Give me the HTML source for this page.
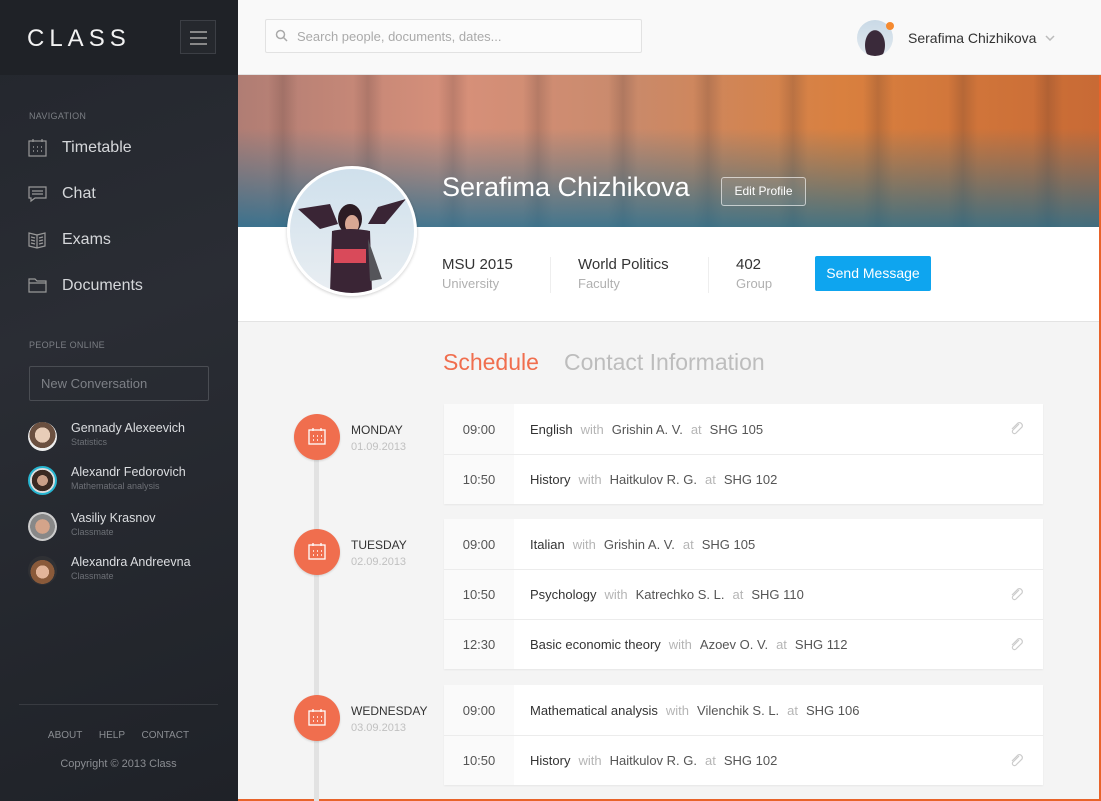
<!DOCTYPE html>
<html><head><meta charset="utf-8"><style>
*{box-sizing:border-box;margin:0;padding:0}
body{width:1101px;height:801px;overflow:hidden;font-family:"Liberation Sans",sans-serif;background:#f4f4f4;position:relative}
.sb{position:absolute;left:0;top:0;width:238px;height:801px;background:linear-gradient(160deg,#23262d 0%,#2a2d34 40%,#1f2228 100%)}
.sb .top{height:75px;background:#1f2227}
.logo{position:absolute;left:27px;top:25px;color:#f2f2f2;font-size:24px;letter-spacing:5px}
.burger{position:absolute;left:180px;top:20px;width:36px;height:34px;border:1px solid #3c3f45;background:#25282d}
.burger i{position:absolute;left:9px;width:17px;height:2px;background:#888}
.sec{position:absolute;left:29px;font-size:9px;color:#7b7e84;letter-spacing:.3px}
.nav{position:absolute;left:28px;color:#d5d7da;font-size:16px;display:flex;align-items:center}
.nav svg{margin-right:15px}
.nc{position:absolute;left:29px;top:366px;width:180px;height:35px;border:1px solid #4a4d53;border-radius:2px;color:#7d8086;font-size:13px;padding:9px 11px}
.p{position:absolute;left:28px;display:flex}
.p .av{width:29px;height:29px;border-radius:50%;margin-right:14px;margin-top:1px}
.p b{display:block;font-weight:normal;color:#dcdee1;font-size:12.5px}
.p s{text-decoration:none;display:block;color:#6d7076;font-size:9px;margin-top:2px}
.foot{position:absolute;left:19px;top:704px;width:199px;border-top:1px solid #383b41;color:#8a8d92;font-size:10px;text-align:center}
.hd{position:absolute;left:238px;top:0;width:863px;height:75px;background:#f9f9f9;border-bottom:1px solid #e4e4e4}
.search{position:absolute;left:27px;top:19px;width:377px;height:34px;border:1px solid #e2e2e2;background:#fbfbfb;border-radius:2px;color:#aaa;font-size:13px;padding:9px 0 0 31px}
.banner{position:absolute;left:238px;top:75px;width:861px;height:152px;background:linear-gradient(180deg,rgba(0,0,0,0) 35%,rgba(20,110,150,.75) 100%),repeating-linear-gradient(90deg,rgba(60,40,40,0) 0 30px,rgba(60,40,40,.18) 45px,rgba(60,40,40,0) 60px,rgba(0,0,0,0) 85px),linear-gradient(90deg,#b07d74 0%,#d7907a 25%,#c98a6c 45%,#d9803f 70%,#c86a35 100%)}
.prof{position:absolute;left:238px;top:227px;width:861px;height:95px;background:#fff;border-bottom:1px solid #e3e3e3}
.avatar{position:absolute;left:287px;top:166px;width:130px;height:130px;border-radius:50%;border:3px solid #fff;overflow:hidden;background:linear-gradient(180deg,#cfe0ec,#e9eef2);box-shadow:0 1px 3px rgba(0,0,0,.2)}
.name{position:absolute;left:442px;top:172px;color:#fff;font-size:27px}
.edit{position:absolute;left:721px;top:177px;width:85px;height:29px;border:1px solid rgba(255,255,255,.6);border-radius:3px;color:#fff;font-size:12px;text-align:center;line-height:27px;background:rgba(255,255,255,.08)}
.st{position:absolute;top:256px;font-size:15px;color:#333}
.st span{display:block;font-size:13px;color:#b0b0b0;margin-top:3px}
.div{position:absolute;top:257px;width:1px;height:36px;background:#eee}
.send{position:absolute;left:815px;top:256px;width:116px;height:35px;background:#0ea5ef;border-radius:2px;color:#fff;font-size:14px;text-align:center;line-height:35px}
.tab{position:absolute;top:349px;font-size:23px}
.line{position:absolute;left:314px;top:437px;width:5px;height:364px;background:#e2e2e2}
.dot{position:absolute;left:294px;width:46px;height:46px;border-radius:50%;background:#f06e4e;box-shadow:0 1px 2px rgba(0,0,0,.15)}
.dot svg{position:absolute;left:14px;top:13px}
.day{position:absolute;left:351px;font-size:12px;color:#333}
.day span{display:block;color:#c0c0c0;font-size:11px;margin-top:4px}
.card{position:absolute;left:444px;width:599px;background:#fff;box-shadow:0 1px 2px rgba(0,0,0,.06)}
.row{height:50px;border-top:1px solid #ececec;display:flex;align-items:center;font-size:13px;color:#333;position:relative}
.row:first-child{border-top:none}
.row .t{width:70px;height:100%;background:#fafafa;display:flex;align-items:center;justify-content:center;color:#555}
.row .c{padding-left:16px}
.row i{font-style:normal;color:#b5b5b5;margin:0 8px}
.row .n{color:#555}
.clip{position:absolute;right:18px;top:17px}
</style></head><body>
<div class="sb"><div class="top"></div>
<div class="logo">CLASS</div>
<div class="burger"><i style="top:10px"></i><i style="top:16px"></i><i style="top:22px"></i></div>
<div class="sec" style="top:111px">NAVIGATION</div>
<div class="nav" style="top:138px"><svg width="19" height="19" viewBox="0 0 19 19" fill="none" stroke="#999" stroke-width="1.2"><rect x="1" y="3" width="17" height="15"/><path d="M5 1v3M14 1v3"/><path d="M5 9h1M9 9h1M13 9h1M5 13h1M9 13h1M13 13h1" stroke-width="1.6"/></svg>Timetable</div>
<div class="nav" style="top:184px"><svg width="19" height="19" viewBox="0 0 19 19" fill="none" stroke="#999" stroke-width="1.2"><path d="M1 3h17v11H7l-4 3v-3H1z"/><path d="M4 7h11M4 10h11"/></svg>Chat</div>
<div class="nav" style="top:230px"><svg width="19" height="19" viewBox="0 0 19 19" fill="none" stroke="#999" stroke-width="1.2"><path d="M1 3l8 2 8-2v13l-8 2-8-2z M9 5v13M3 7l4 1M3 10l4 1M3 13l4 1M11 8l4-1M11 11l4-1M11 14l4-1"/></svg>Exams</div>
<div class="nav" style="top:276px"><svg width="19" height="19" viewBox="0 0 19 19" fill="none" stroke="#999" stroke-width="1.2"><path d="M1 3h6l2 2h9v11H1zM1 7h17"/></svg>Documents</div>
<div class="sec" style="top:340px">PEOPLE ONLINE</div>
<div class="nc">New Conversation</div>
<div class="p" style="top:421px"><div class="av" style="background:radial-gradient(circle at 50% 45%,#e8cdb8 0 35%,#6b5040 36% 60%,#eee 61%)"></div><div><b>Gennady Alexeevich</b><s>Statistics</s></div></div>
<div class="p" style="top:465px"><div class="av" style="border:2px solid #26b5d0;background:radial-gradient(circle at 50% 50%,#c9a088 0 30%,#3a2a22 31% 60%,#ddd 61%)"></div><div><b>Alexandr Fedorovich</b><s>Mathematical analysis</s></div></div>
<div class="p" style="top:511px"><div class="av" style="background:radial-gradient(circle at 50% 50%,#d4a48a 0 35%,#888 36% 60%,#ccc 61%)"></div><div><b>Vasiliy Krasnov</b><s>Classmate</s></div></div>
<div class="p" style="top:555px"><div class="av" style="background:radial-gradient(circle at 50% 55%,#e3b59a 0 30%,#8a5a3a 31% 55%,#2f3034 56%)"></div><div><b>Alexandra Andreevna</b><s>Classmate</s></div></div>
<div class="foot"><div style="margin-top:25px">ABOUT &nbsp;&nbsp;&nbsp;&nbsp;&nbsp;HELP &nbsp;&nbsp;&nbsp;&nbsp;&nbsp;CONTACT</div><div style="margin-top:17px;font-size:11px">Copyright © 2013 Class</div></div>
</div>
<div class="hd"><div class="search">Search people, documents, dates...</div>
<svg style="position:absolute;left:37px;top:29px" width="13" height="13" viewBox="0 0 13 13" fill="none" stroke="#aaa" stroke-width="1.5"><circle cx="5.5" cy="5.5" r="4"/><path d="M8.5 8.5l3.5 3.5"/></svg>
<div style="position:absolute;left:619px;top:20px;width:36px;height:36px;border-radius:50%;background:radial-gradient(ellipse 30% 45% at 50% 70%,#3a2a3a 0 90%,transparent 95%),linear-gradient(#c9d9e6,#e2eaf0)"></div>
<div style="position:absolute;left:648px;top:22px;width:8px;height:8px;border-radius:50%;background:#f58a30"></div>
<div style="position:absolute;left:670px;top:30px;font-size:14px;color:#333">Serafima Chizhikova</div>
<svg style="position:absolute;left:807px;top:35px" width="10" height="6" viewBox="0 0 10 6" fill="none" stroke="#bbb" stroke-width="1.5"><path d="M1 1l4 4 4-4"/></svg>
</div>
<div class="banner"></div>
<div class="prof"></div>
<div style="position:absolute;left:1099px;top:75px;width:2px;height:726px;background:#e8632a"></div>
<div style="position:absolute;left:238px;top:799px;width:863px;height:2px;background:#e8632a"></div>
<div class="avatar"><svg width="124" height="124" viewBox="0 0 124 124"><path d="M8 40 L30 60 L48 55 L40 35 Z" fill="#3a2535"/><path d="M116 30 L95 55 L78 55 L88 38Z" fill="#3a2535"/><ellipse cx="60" cy="50" rx="12" ry="15" fill="#2c1c24"/><ellipse cx="62" cy="55" rx="7" ry="9" fill="#d9a894"/><path d="M42 62 Q60 58 80 62 L82 124 L40 124Z" fill="#3a2535"/><rect x="44" y="80" width="32" height="14" fill="#d94a5a"/><path d="M78 70 L92 110 L80 112Z" fill="#55555a"/></svg></div>
<div class="name">Serafima Chizhikova</div>
<div class="edit">Edit Profile</div>
<div class="st" style="left:442px">MSU 2015<span>University</span></div>
<div class="div" style="left:550px"></div>
<div class="st" style="left:578px">World Politics<span>Faculty</span></div>
<div class="div" style="left:708px"></div>
<div class="st" style="left:736px">402<span>Group</span></div>
<div class="send">Send Message</div>
<div class="tab" style="left:443px;color:#f06e4e">Schedule</div>
<div class="tab" style="left:564px;color:#bdbdbd">Contact Information</div>
<div class="line"></div>
<div class="dot" style="top:414px"><svg width="18" height="18" viewBox="0 0 18 18" fill="none" stroke="#fff" stroke-width="1.3"><rect x="1" y="3" width="16" height="14"/><path d="M5 1v3M13 1v3"/><path d="M5 9h1M9 9h1M13 9h1M5 13h1M9 13h1M13 13h1" stroke-width="1.6"/></svg></div>
<div class="dot" style="top:529px"><svg width="18" height="18" viewBox="0 0 18 18" fill="none" stroke="#fff" stroke-width="1.3"><rect x="1" y="3" width="16" height="14"/><path d="M5 1v3M13 1v3"/><path d="M5 9h1M9 9h1M13 9h1M5 13h1M9 13h1M13 13h1" stroke-width="1.6"/></svg></div>
<div class="dot" style="top:695px"><svg width="18" height="18" viewBox="0 0 18 18" fill="none" stroke="#fff" stroke-width="1.3"><rect x="1" y="3" width="16" height="14"/><path d="M5 1v3M13 1v3"/><path d="M5 9h1M9 9h1M13 9h1M5 13h1M9 13h1M13 13h1" stroke-width="1.6"/></svg></div>
<div class="day" style="top:423px">MONDAY<span>01.09.2013</span></div>
<div class="day" style="top:538px">TUESDAY<span>02.09.2013</span></div>
<div class="day" style="top:704px">WEDNESDAY<span>03.09.2013</span></div>
<div class="card" style="top:404px">
<div class="row"><div class="t">09:00</div><div class="c">English<i>with</i><span class="n">Grishin A. V.</span><i>at</i><span class="n">SHG 105</span></div><svg class="clip" width="16" height="16" viewBox="0 0 16 16" fill="none" stroke="#ccc" stroke-width="1.2"><path d="M10 3L4 9a2 2 0 003 3l6-6a3 3 0 00-4-4L3 8"/></svg></div>
<div class="row"><div class="t">10:50</div><div class="c">History<i>with</i><span class="n">Haitkulov R. G.</span><i>at</i><span class="n">SHG 102</span></div></div>
</div>
<div class="card" style="top:519px">
<div class="row"><div class="t">09:00</div><div class="c">Italian<i>with</i><span class="n">Grishin A. V.</span><i>at</i><span class="n">SHG 105</span></div></div>
<div class="row"><div class="t">10:50</div><div class="c">Psychology<i>with</i><span class="n">Katrechko S. L.</span><i>at</i><span class="n">SHG 110</span></div><svg class="clip" width="16" height="16" viewBox="0 0 16 16" fill="none" stroke="#ccc" stroke-width="1.2"><path d="M10 3L4 9a2 2 0 003 3l6-6a3 3 0 00-4-4L3 8"/></svg></div>
<div class="row"><div class="t">12:30</div><div class="c">Basic economic theory<i>with</i><span class="n">Azoev O. V.</span><i>at</i><span class="n">SHG 112</span></div><svg class="clip" width="16" height="16" viewBox="0 0 16 16" fill="none" stroke="#ccc" stroke-width="1.2"><path d="M10 3L4 9a2 2 0 003 3l6-6a3 3 0 00-4-4L3 8"/></svg></div>
</div>
<div class="card" style="top:685px">
<div class="row"><div class="t">09:00</div><div class="c">Mathematical analysis<i>with</i><span class="n">Vilenchik S. L.</span><i>at</i><span class="n">SHG 106</span></div></div>
<div class="row"><div class="t">10:50</div><div class="c">History<i>with</i><span class="n">Haitkulov R. G.</span><i>at</i><span class="n">SHG 102</span></div><svg class="clip" width="16" height="16" viewBox="0 0 16 16" fill="none" stroke="#ccc" stroke-width="1.2"><path d="M10 3L4 9a2 2 0 003 3l6-6a3 3 0 00-4-4L3 8"/></svg></div>
</div>
</body></html>
